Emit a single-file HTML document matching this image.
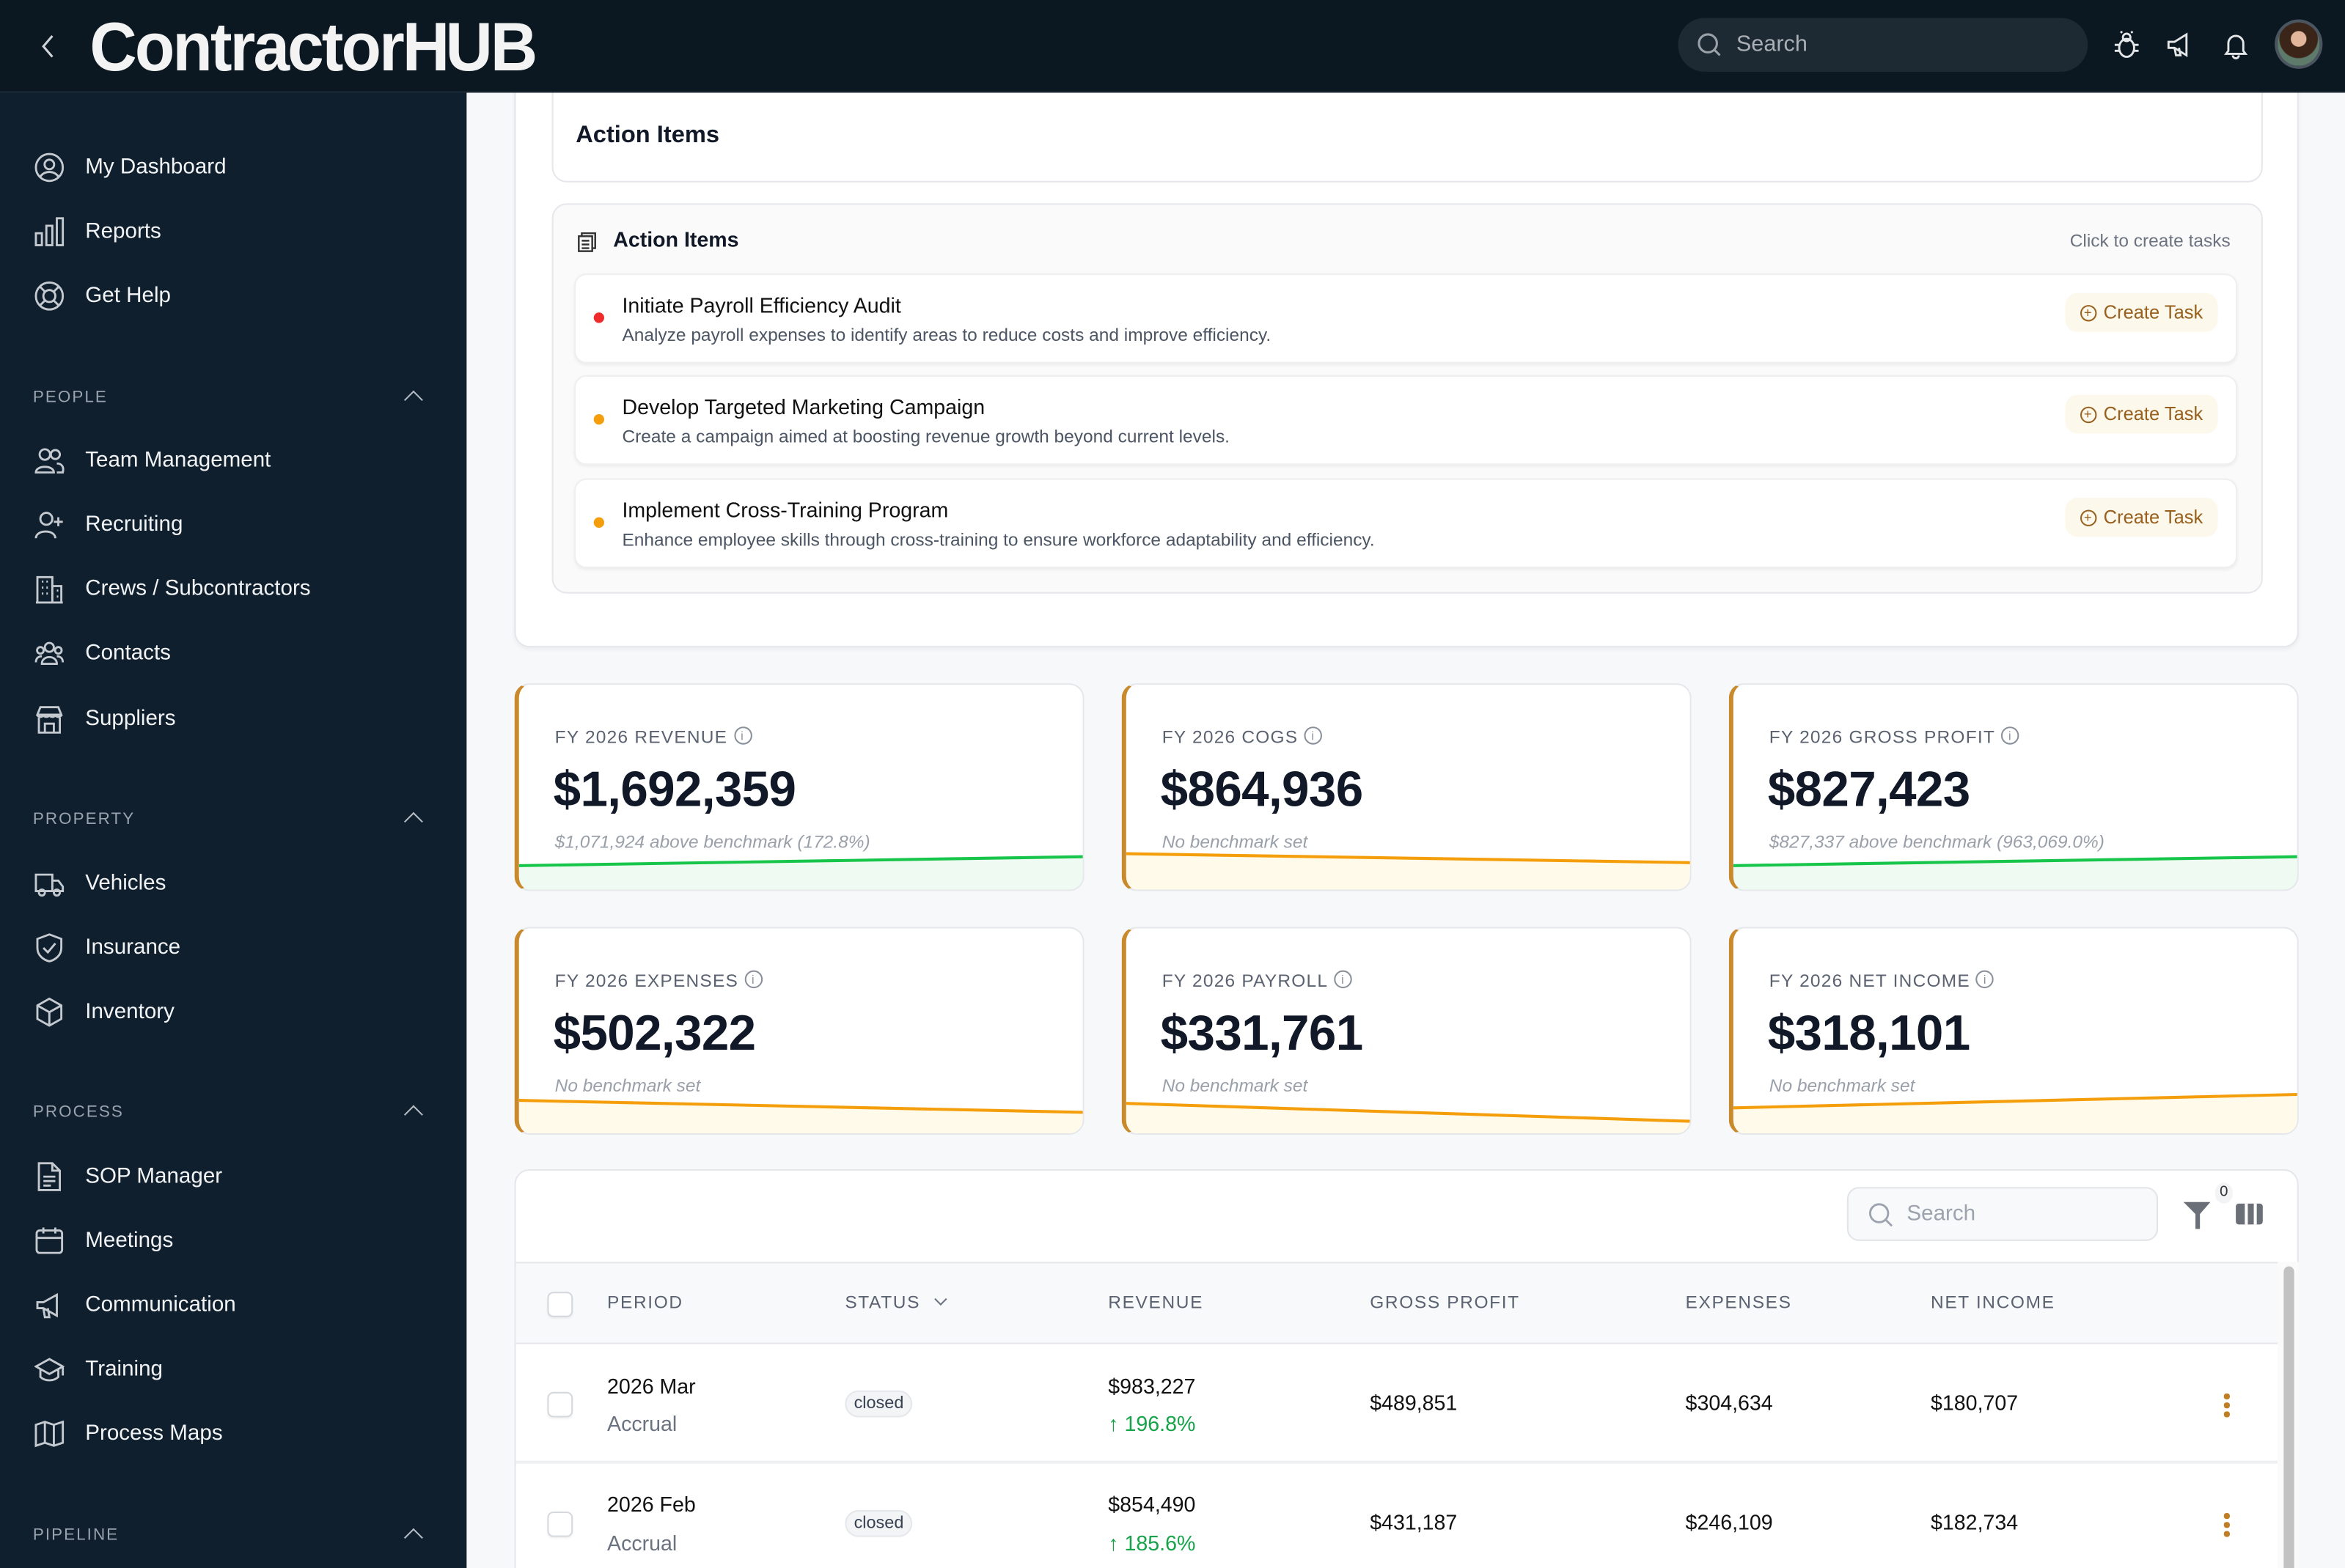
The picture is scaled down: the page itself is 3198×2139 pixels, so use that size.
<!DOCTYPE html>
<html><head><meta charset="utf-8"><style>
*{box-sizing:border-box;margin:0;padding:0}
html,body{width:3198px;height:2138px;overflow:hidden;background:#f7f8fa}
#r{position:absolute;left:0;top:0;width:1568px;height:1049px;transform:scale(2.03954);transform-origin:0 0;font-family:"Liberation Sans",Arial,sans-serif;color:#111827;overflow:hidden;background:#f7f8fa}
.a{position:absolute}
.top{left:0;top:0;width:1568px;height:62px;background:#0b1822;border-bottom:1px solid #1c2a36;z-index:10}
.side{left:0;top:62px;width:312px;height:990px;background:#0f1f2e}
.nav{position:absolute;left:23px;display:flex;align-items:center;gap:14px;color:#f1f3f5;font-size:14.5px}
.nav svg{width:20px;height:20px;fill:none;stroke:#c5cad0;stroke-width:1.4}
.sec{position:absolute;left:22px;font-size:11px;letter-spacing:1px;color:#9aa3ad}
.chev{position:absolute;left:272px;width:9px;height:9px;border-left:1.5px solid #b5bcc4;border-top:1.5px solid #b5bcc4;transform:rotate(45deg)}
.card{background:#fff;border:1px solid #e5e7eb;border-radius:10px}
.item{position:absolute;left:384px;width:1112px;height:60px;background:#fff;border-radius:8px;box-shadow:0 1px 2px rgba(0,0,0,.06);border:1px solid #efefef}
.item .d{position:absolute;left:12px;top:25px;width:7px;height:7px;border-radius:50%}
.item .t{position:absolute;left:31px;top:12px;font-size:14px;color:#111}
.item .s{position:absolute;left:31px;top:33px;font-size:12px;color:#4b5563}
.btn{position:absolute;right:12px;top:12px;height:26px;padding:0 10px;background:#fdf8ec;border-radius:8px;color:#98601e;font-size:12.5px;display:flex;align-items:center;gap:5px}
.btn i{width:11px;height:11px;border:1.2px solid #98601e;border-radius:50%;font-style:normal;font-size:9px;line-height:9px;text-align:center}
.kpi{position:absolute;width:381px;height:139px;background:#fff;border:1px solid #e5e7eb;border-radius:10px;overflow:hidden;border-left:3px solid #c98a2e}
.kpi .l{position:absolute;left:24px;top:28px;font-size:12px;letter-spacing:.6px;color:#5b6270}
.kpi .l b{display:inline-block;width:12px;height:12px;border:1px solid #8a909a;border-radius:50%;font-size:8px;text-align:center;line-height:11px;font-weight:normal;margin-left:4px;vertical-align:2px;color:#8a909a}
.kpi .v{position:absolute;left:23px;top:51px;font-size:33px;font-weight:bold;color:#111827;letter-spacing:-.3px}
.kpi .n{position:absolute;left:24px;top:98px;font-size:12px;font-style:italic;color:#9aa0a9}
.kpi svg{position:absolute;left:0;bottom:0;width:378px;height:30px}
.th{position:absolute;top:864px;font-size:12px;letter-spacing:.8px;color:#5b6270}
.cb{position:absolute;left:366px;width:17px;height:17px;border:1px solid #d5d8dd;border-radius:4px;background:#fff;box-shadow:0 1px 1px rgba(0,0,0,.05)}
.td{position:absolute;font-size:14px;color:#111}
.sub{color:#6b7280}
.pill{position:absolute;left:565px;font-size:11.5px;color:#374151;background:#f3f4f6;border:1px solid #e5e7eb;border-radius:10px;padding:2px 5px}
.dots{position:absolute;left:1487px;width:4px}
.dots i{display:block;width:3.5px;height:3.5px;background:#c07e25;border-radius:50%;margin-bottom:2.5px}
</style></head><body><div id="r">
<div class="a top">
 <svg class="a" style="left:26px;top:22px" width="12" height="18" viewBox="0 0 12 18"><path d="M9 2L3 9l6 7" fill="none" stroke="#d0d4d8" stroke-width="1.5"/></svg>
 <div class="a" style="left:60px;top:4px;font-size:46px;font-weight:bold;color:#f3f3f3;letter-spacing:-1.5px;transform:scaleX(.95);transform-origin:0 0">Contractor<span style="letter-spacing:-3px">H</span>UB</div>
 <div class="a" style="left:1122px;top:12px;width:274px;height:36px;border-radius:18px;background:#1e2a33"></div>
 <svg class="a" style="left:1134px;top:21px" width="18" height="18" viewBox="0 0 18 18"><circle cx="8" cy="8" r="6" fill="none" stroke="#9aa1a8" stroke-width="1.5"/><path d="M12.5 12.5L16 16" stroke="#9aa1a8" stroke-width="1.5"/></svg>
 <div class="a" style="left:1161px;top:21px;font-size:15px;color:#a9afb5">Search</div>
 <svg class="a" style="left:1412px;top:20px" width="20" height="20" viewBox="0 0 20 20" fill="none" stroke="#e4e6e8" stroke-width="1.4"><ellipse cx="10" cy="12" rx="5" ry="6"/><circle cx="10" cy="5" r="2.5"/><path d="M5 10H2M15 10h3M5 14H2M15 14h3M7 2L6 1M13 2l1-1"/></svg>
 <svg class="a" style="left:1448px;top:20px" width="20" height="20" viewBox="0 0 20 20" fill="none" stroke="#e4e6e8" stroke-width="1.4"><path d="M2 8v4h4l8 5V3L6 8z M6 12l1 5h3l-1-5"/></svg>
 <svg class="a" style="left:1485px;top:20px" width="20" height="20" viewBox="0 0 20 20" fill="none" stroke="#e4e6e8" stroke-width="1.4"><path d="M5 14V9a5 5 0 0110 0v5l1.5 2h-13z M8 17a2 2 0 004 0"/></svg>
 <div class="a" style="left:1521px;top:13px;width:32px;height:33px;border-radius:50%;background:radial-gradient(circle at 50% 38%,#e2b69a 0 22%,#3b2418 24% 55%,#5e7a6a 58%);border:2px solid #4a5560"></div>
</div>
<div class="a side"></div>
<div class="nav" style="top:102px"><svg viewBox="0 0 20 20"><circle cx="10" cy="10" r="9"/><circle cx="10" cy="8" r="3.2"/><path d="M4 16c3-4 9-4 12 0"/></svg>My Dashboard</div>
<div class="nav" style="top:145px"><svg viewBox="0 0 20 20"><rect x="1" y="11" width="4" height="8"/><rect x="8" y="6" width="4" height="13"/><rect x="15" y="1" width="4" height="18"/></svg>Reports</div>
<div class="nav" style="top:188px"><svg viewBox="0 0 20 20"><circle cx="10" cy="10" r="9"/><circle cx="10" cy="10" r="4"/><path d="M4 4l3 3M16 4l-3 3M4 16l3-3M16 16l-3-3"/></svg>Get Help</div>
<div class="sec" style="top:260px">PEOPLE</div><div class="chev" style="top:263px"></div>
<div class="nav" style="top:298px"><svg viewBox="0 0 20 20"><circle cx="7" cy="6" r="3.5"/><path d="M1 18c0-5 12-5 12 0z"/><circle cx="14" cy="6" r="3"/><path d="M15 12c3 0 5 2 4 6h-4"/></svg>Team Management</div>
<div class="nav" style="top:341px"><svg viewBox="0 0 20 20"><circle cx="8" cy="6" r="4"/><path d="M1 19c0-6 13-6 13 0M16 5v6M13 8h6"/></svg>Recruiting</div>
<div class="nav" style="top:384px"><svg viewBox="0 0 20 20"><path d="M2 19V2h10v17M12 8h6v11M1 19h18M5 5h1M8 5h1M5 9h1M8 9h1M5 13h1M8 13h1M15 11h1M15 15h1"/></svg>Crews / Subcontractors</div>
<div class="nav" style="top:427px"><svg viewBox="0 0 20 20"><circle cx="10" cy="6" r="3"/><circle cx="4" cy="8" r="2.2"/><circle cx="16" cy="8" r="2.2"/><path d="M5 17c0-6 10-6 10 0zM1 16c0-3 2-4 4-4M19 16c0-3-2-4-4-4"/></svg>Contacts</div>
<div class="nav" style="top:471px"><svg viewBox="0 0 20 20"><path d="M2 7l2-5h12l2 5zM2 7c0 2 4 2 4 0 0 2 4 2 4 0 0 2 4 2 4 0 0 2 4 2 4 0M3 9v10h14V9M7 19v-6h6v6"/></svg>Suppliers</div>
<div class="sec" style="top:542px">PROPERTY</div><div class="chev" style="top:545px"></div>
<div class="nav" style="top:581px"><svg viewBox="0 0 20 20"><path d="M1 4h11v11H1zM12 8h4l3 4v3h-7"/><circle cx="5" cy="16" r="2"/><circle cx="15" cy="16" r="2"/></svg>Vehicles</div>
<div class="nav" style="top:624px"><svg viewBox="0 0 20 20"><path d="M10 1l8 3v6c0 5-4 8-8 9-4-1-8-4-8-9V4z"/><path d="M6 10l3 3 5-6"/></svg>Insurance</div>
<div class="nav" style="top:667px"><svg viewBox="0 0 20 20"><path d="M10 1l8 4.5v9L10 19l-8-4.5v-9zM2 5.5l8 4.5 8-4.5M10 10v9"/></svg>Inventory</div>
<div class="sec" style="top:738px">PROCESS</div><div class="chev" style="top:741px"></div>
<div class="nav" style="top:777px"><svg viewBox="0 0 20 20"><path d="M3 1h9l5 5v13H3zM12 1v5h5M6 10h8M6 13h8M6 16h5"/></svg>SOP Manager</div>
<div class="nav" style="top:820px"><svg viewBox="0 0 20 20"><rect x="1.5" y="3" width="17" height="15" rx="2"/><path d="M1.5 8h17M6 1v4M14 1v4"/></svg>Meetings</div>
<div class="nav" style="top:863px"><svg viewBox="0 0 20 20"><path d="M2 8v4h4l9 5V3L6 8z M6 12l1 6h3l-1-6"/></svg>Communication</div>
<div class="nav" style="top:906px"><svg viewBox="0 0 20 20"><path d="M10 3L1 8l9 5 9-5zM4 10v5c3 3 9 3 12 0v-5M19 8v6"/></svg>Training</div>
<div class="nav" style="top:949px"><svg viewBox="0 0 20 20"><path d="M1 4l6-2 6 2 6-2v14l-6 2-6-2-6 2zM7 2v14M13 4v14"/></svg>Process Maps</div>
<div class="sec" style="top:1021px">PIPELINE</div><div class="chev" style="top:1024px"></div>

<!-- main -->
<div class="a card" style="left:344px;top:40px;width:1193px;height:393px;box-shadow:0 1px 3px rgba(0,0,0,.06)"></div>
<div class="a card" style="left:369px;top:40px;width:1144px;height:82px"></div>
<div class="a" style="left:385px;top:82px;font-size:16px;font-weight:bold">Action Items</div>
<div class="a" style="left:369px;top:136px;width:1144px;height:261px;background:#fafafa;border:1px solid #e5e7eb;border-radius:10px"></div>
<svg class="a" style="left:386px;top:155px" width="13" height="14" viewBox="0 0 13 14" fill="none" stroke="#333" stroke-width="1.2"><rect x="1" y="3" width="9" height="10"/><path d="M3 3V1h9v10h-2M3 6h5M3 8.5h5M3 11h5"/></svg>
<div class="a" style="left:410px;top:152px;font-size:14px;font-weight:bold">Action Items</div>
<div class="a" style="left:1384px;top:154px;font-size:12px;color:#6b7280">Click to create tasks</div>
<div class="item" style="top:183px"><span class="d" style="background:#ef2b2b"></span><div class="t">Initiate Payroll Efficiency Audit</div><div class="s">Analyze payroll expenses to identify areas to reduce costs and improve efficiency.</div><div class="btn"><i>+</i>Create Task</div></div>
<div class="item" style="top:251px"><span class="d" style="background:#f59e0b"></span><div class="t">Develop Targeted Marketing Campaign</div><div class="s">Create a campaign aimed at boosting revenue growth beyond current levels.</div><div class="btn"><i>+</i>Create Task</div></div>
<div class="item" style="top:320px"><span class="d" style="background:#f59e0b"></span><div class="t">Implement Cross-Training Program</div><div class="s">Enhance employee skills through cross-training to ensure workforce adaptability and efficiency.</div><div class="btn"><i>+</i>Create Task</div></div>

<div class="kpi" style="left:344px;top:457px"><div class="l">FY 2026 REVENUE<b>i</b></div><div class="v">$1,692,359</div><div class="n">$1,071,924 above benchmark (172.8%)</div><svg viewBox="0 0 378 30" preserveAspectRatio="none"><path d="M0 14L378 8V30H0z" fill="#effbf2"/><path d="M0 14L378 8" stroke="#16c54a" stroke-width="2"/></svg></div>
<div class="kpi" style="left:750px;top:457px"><div class="l">FY 2026 COGS<b>i</b></div><div class="v">$864,936</div><div class="n">No benchmark set</div><svg viewBox="0 0 378 30" preserveAspectRatio="none"><path d="M0 6L378 12V30H0z" fill="#fffaea"/><path d="M0 6L378 12" stroke="#f59e0b" stroke-width="2"/></svg></div>
<div class="kpi" style="left:1156px;top:457px"><div class="l">FY 2026 GROSS PROFIT<b>i</b></div><div class="v">$827,423</div><div class="n">$827,337 above benchmark (963,069.0%)</div><svg viewBox="0 0 378 30" preserveAspectRatio="none"><path d="M0 14L378 8V30H0z" fill="#effbf2"/><path d="M0 14L378 8" stroke="#16c54a" stroke-width="2"/></svg></div>
<div class="kpi" style="left:344px;top:620px"><div class="l">FY 2026 EXPENSES<b>i</b></div><div class="v">$502,322</div><div class="n">No benchmark set</div><svg viewBox="0 0 378 30" preserveAspectRatio="none"><path d="M0 8L378 16V30H0z" fill="#fffaea"/><path d="M0 8L378 16" stroke="#f59e0b" stroke-width="2"/></svg></div>
<div class="kpi" style="left:750px;top:620px"><div class="l">FY 2026 PAYROLL<b>i</b></div><div class="v">$331,761</div><div class="n">No benchmark set</div><svg viewBox="0 0 378 30" preserveAspectRatio="none"><path d="M0 10L378 22V30H0z" fill="#fffaea"/><path d="M0 10L378 22" stroke="#f59e0b" stroke-width="2"/></svg></div>
<div class="kpi" style="left:1156px;top:620px"><div class="l">FY 2026 NET INCOME<b>i</b></div><div class="v">$318,101</div><div class="n">No benchmark set</div><svg viewBox="0 0 378 30" preserveAspectRatio="none"><path d="M0 13L378 4V30H0z" fill="#fffaea"/><path d="M0 13L378 4" stroke="#f59e0b" stroke-width="2"/></svg></div>

<div class="a card" style="left:344px;top:782px;width:1193px;height:300px"></div>
<div class="a" style="left:1235px;top:794px;width:208px;height:36px;border:1px solid #e2e4e8;border-radius:8px;background:#f8f9fb"></div>
<svg class="a" style="left:1249px;top:804px" width="17" height="17" viewBox="0 0 17 17"><circle cx="7.5" cy="7.5" r="6" fill="none" stroke="#9ca3af" stroke-width="1.4"/><path d="M12 12l4 4" stroke="#9ca3af" stroke-width="1.4"/></svg>
<div class="a" style="left:1275px;top:804px;font-size:14.5px;color:#9ca3af">Search</div>
<svg class="a" style="left:1460px;top:803px" width="18" height="20" viewBox="0 0 18 20"><path d="M0 1h18l-7 8v10l-3 0V9z" fill="#6b6f78"/></svg>
<div class="a" style="left:1481px;top:791px;width:12px;height:14px;border-radius:50%;background:#f3f4f6;font-size:10px;text-align:center;line-height:14px;color:#333">0</div>
<div class="a" style="left:1495px;top:805px;width:18px;height:14px;border-radius:2px;background:#6b6f78"></div>
<div class="a" style="left:1501px;top:805px;width:1.5px;height:14px;background:#fff"></div><div class="a" style="left:1507px;top:805px;width:1.5px;height:14px;background:#fff"></div>
<div class="a" style="left:345px;top:844px;width:1178px;height:55px;background:#f8f9fb;border-top:1px solid #e5e7eb;border-bottom:1.5px solid #e5e7eb"></div>
<div class="cb" style="top:864px"></div>
<div class="th" style="left:406px">PERIOD</div>
<div class="th" style="left:565px">STATUS <span style="display:inline-block;width:6px;height:6px;border-right:1.3px solid #6b7280;border-bottom:1.3px solid #6b7280;transform:rotate(45deg);margin-left:6px;vertical-align:3px"></span></div>
<div class="th" style="left:741px">REVENUE</div>
<div class="th" style="left:916px">GROSS PROFIT</div>
<div class="th" style="left:1127px">EXPENSES</div>
<div class="th" style="left:1291px">NET INCOME</div>
<div class="a" style="left:345px;top:977px;width:1178px;height:1.5px;background:#eef0f2"></div>
<div class="a" style="left:1523px;top:844px;width:14px;height:210px;background:#fafafa"></div>
<div class="a" style="left:1527px;top:847px;width:7px;height:210px;border-radius:4px;background:#c2c2c2"></div>

<div class="cb" style="top:931px"></div>
<div class="td" style="left:406px;top:919px">2026 Mar</div><div class="td sub" style="left:406px;top:944px">Accrual</div>
<div class="pill" style="top:930px">closed</div>
<div class="td" style="left:741px;top:919px">$983,227</div><div class="td" style="left:741px;top:944px;color:#16a34a">↑ 196.8%</div>
<div class="td" style="left:916px;top:930px">$489,851</div><div class="td" style="left:1127px;top:930px">$304,634</div><div class="td" style="left:1291px;top:930px">$180,707</div>
<div class="dots" style="top:932px"><i></i><i></i><i></i></div>

<div class="cb" style="top:1011px"></div>
<div class="td" style="left:406px;top:998px">2026 Feb</div><div class="td sub" style="left:406px;top:1024px">Accrual</div>
<div class="pill" style="top:1010px">closed</div>
<div class="td" style="left:741px;top:998px">$854,490</div><div class="td" style="left:741px;top:1024px;color:#16a34a">↑ 185.6%</div>
<div class="td" style="left:916px;top:1010px">$431,187</div><div class="td" style="left:1127px;top:1010px">$246,109</div><div class="td" style="left:1291px;top:1010px">$182,734</div>
<div class="dots" style="top:1012px"><i></i><i></i><i></i></div>
</div></body></html>
